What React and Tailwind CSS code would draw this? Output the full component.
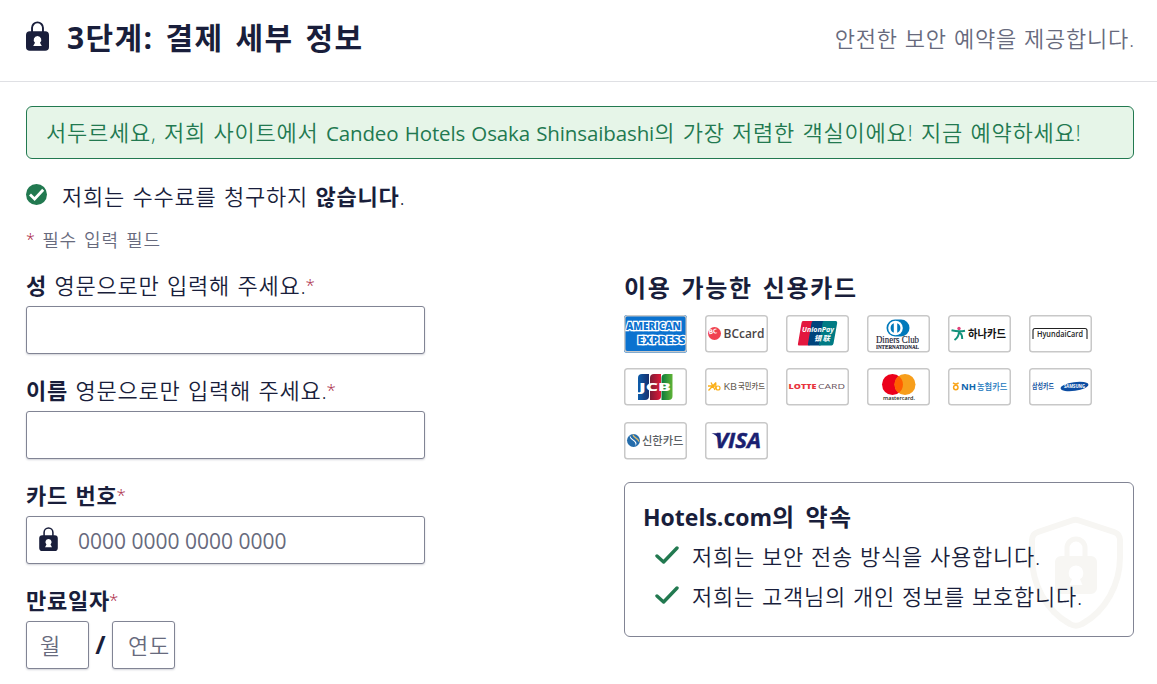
import clsx from 'clsx';

const SANS = "font-['Open_Sans','Noto_Sans_CJK_KR',sans-serif]";

function LockIcon({ className }) {
  return (
    <svg viewBox="0 0 24 31" className={className} fill="none">
      <path d="M6.300 12V7a5.700 5.700 0 0 1 11.400 0V12" stroke="#191e3b" strokeWidth="2" />
      <path
        fillRule="evenodd"
        fill="#191e3b"
        d="M4 10.500h16a4 4 0 0 1 4 4V27a4 4 0 0 1-4 4H4a4 4 0 0 1-4-4V14.500a4 4 0 0 1 4-4ZM12 15.500a4 4 0 0 0-2.600 7L7.500 26h9l-1.900-3.500A4 4 0 0 0 12 15.500Z"
      />
    </svg>
  );
}

function CheckCircle() {
  return (
    <svg viewBox="0 0 21 21" className="mb-[3px] h-[21px] w-[21px] shrink-0">
      <circle cx="10.500" cy="10.500" r="10.500" fill="#227950" />
      <path d="M4 10.500l4.600 4.500L17.200 5.800" fill="none" stroke="#fff" strokeWidth="2.800" />
    </svg>
  );
}

function Check() {
  return (
    <svg viewBox="0 0 24 18" className="mb-[3px] h-[18px] w-6 shrink-0">
      <path
        d="M2 10l6.600 6L22 2"
        fill="none"
        stroke="#227950"
        strokeWidth="3.400"
        strokeLinecap="round"
        strokeLinejoin="round"
      />
    </svg>
  );
}

function Shield() {
  return (
    <svg viewBox="0 0 96 114" className="absolute right-[9px] bottom-[6px] h-[114px] w-24" fill="none">
      <path
        d="M44 4.500a10 10 0 0 1 7 0L86 16c4 1.400 6 4 6 8v17c0 27-14 54-38 67-4 2.300-8 2.300-12 0C18 95 4 68 4 41V24c0-4 2-6.600 6-8Z"
        stroke="#f7f6f3"
        strokeWidth="6"
      />
      <path d="M39 43V32a9 9 0 0 1 18 0v11" stroke="#f7f6f3" strokeWidth="5" />
      <path
        fillRule="evenodd"
        fill="#f7f6f3"
        d="M33 40h30a6 6 0 0 1 6 6v26a6 6 0 0 1-6 6H33a6 6 0 0 1-6-6V46a6 6 0 0 1 6-6ZM48 49.500a7.500 7.500 0 0 0-4 13.700L41.500 69h13L52 63.200A7.500 7.500 0 0 0 48 49.500Z"
      />
    </svg>
  );
}

const bodyText = 'text-[22px] tracking-[0.76px] [word-spacing:1px] whitespace-nowrap';

function Label({ bold, hint }) {
  return (
    <label className={clsx('block h-[39px] leading-[37px]', bodyText)}>
      <span className="font-bold">{bold}</span>
      {hint && <span> {hint}</span>}
      <span className="ml-[-1px] align-[3px] text-[17px] leading-none text-[#a7183c]">*</span>
    </label>
  );
}

const inputClass =
  'block h-12 rounded-[3px] border border-[#818494] bg-white text-[22px] shadow-[0_1px_2px_rgba(25,30,59,0.2)] outline-none placeholder:text-[#676a7d]';

const cards = [
  {
    name: 'amex',
    logo: (
      <>
        <rect width="63" height="37.800" fill="#0b72cf" />
        <g fill="#0b72cf" stroke="#fff" strokeWidth="2.400" paintOrder="stroke" fontWeight="800" fontSize="10.500">
          <text x="2" y="15.500" textLength="55" lengthAdjust="spacingAndGlyphs">AMERICAN</text>
          <text x="13.500" y="28.800" textLength="48" lengthAdjust="spacingAndGlyphs">EXPRESS</text>
        </g>
      </>
    ),
  },
  {
    name: 'bc',
    logo: (
      <>
        <circle cx="9.500" cy="18.500" r="6.500" fill="#f0424f" />
        <text x="4" y="18.500" fontSize="6.500" fontWeight="700" fill="#fff" transform="rotate(-8 9.500 18.500)">BC</text>
        <text x="18.500" y="22.800" fontSize="12" fontWeight="600" fill="#4a4546" textLength="41" lengthAdjust="spacingAndGlyphs">BCcard</text>
      </>
    ),
  },
  {
    name: 'unionpay',
    logo: (
      <>
        <path d="M17 6h11l-4.500 24.500H12.500q-1-.5-.5-2L15.500 8q.3-2 1.500-2Z" fill="#e3173e" />
        <path d="M27 6h12l-4.500 24.500H22.500q-1-.5-.5-2L25.500 8q.3-2 1.500-2Z" fill="#00447c" />
        <path d="M38 6h12q1.500.3 1.200 2L47.500 28.500q-.5 2-2 2H33.500q-1-.5-.5-2L36.500 8q.3-2 1.500-2Z" fill="#007b84" />
        <g fill="#fff" fontWeight="700" fontStyle="italic">
          <text x="16" y="17" fontSize="7.500" textLength="32" lengthAdjust="spacingAndGlyphs">UnionPay</text>
          <text x="28" y="26" fontSize="7.500" textLength="16">银联</text>
        </g>
      </>
    ),
  },
  {
    name: 'diners',
    logo: (
      <>
        <path d="M28 4.500h6a8.300 8.300 0 0 1 0 17h-6a8.500 8.500 0 0 1 0-17Z" fill="#0079bb" />
        <circle cx="28.500" cy="13" r="7.300" fill="#fff" />
        <path d="M26.800 8.200v9.600a5.200 5.200 0 0 1 0-9.600ZM30.200 8.200v9.600a5.200 5.200 0 0 0 0-9.600Z" fill="#0079bb" />
        <g fill="#1b1b32" fontFamily="Liberation Serif, serif" stroke="#1b1b32" strokeWidth=".15">
          <text x="9" y="28.500" fontSize="9.500" textLength="43" lengthAdjust="spacingAndGlyphs">Diners Club</text>
          <text x="9" y="34.300" fontSize="5.500" fontWeight="700" textLength="43" lengthAdjust="spacingAndGlyphs">INTERNATIONAL</text>
        </g>
      </>
    ),
  },
  {
    name: 'hana',
    logo: (
      <>
        <circle cx="11" cy="13.500" r="1.700" fill="#e0457b" />
        <path d="M3.500 15.200q7 1.800 13.500.5M11 16c0 4-1.500 7-4.500 9M11 18c2.500 0 3.200 3 3.200 6" fill="none" stroke="#12917b" strokeWidth="2" />
        <text x="20" y="23" fontSize="11" fontWeight="700" fill="#111" textLength="38" lengthAdjust="spacingAndGlyphs">하나카드</text>
      </>
    ),
  },
  {
    name: 'hyundai',
    logo: (
      <>
        <path d="M4 24V15.500q0-2 2-2h50q2 0 2 2V24" fill="none" stroke="#222" strokeWidth="1.100" />
        <text x="8" y="22.500" fontSize="8" fontWeight="600" fill="#222" textLength="46" lengthAdjust="spacingAndGlyphs">HyundaiCard</text>
      </>
    ),
  },
  {
    name: 'jcb',
    logo: (
      <>
        <defs>
          <linearGradient id="jcbBlue">
            <stop offset="0" stopColor="#0d5ca9" />
            <stop offset="1" stopColor="#16306e" />
          </linearGradient>
          <linearGradient id="jcbRed">
            <stop offset="0" stopColor="#7b1b36" />
            <stop offset="1" stopColor="#df1738" />
          </linearGradient>
          <linearGradient id="jcbGreen">
            <stop offset="0" stopColor="#0a7a3c" />
            <stop offset="1" stopColor="#5fb336" />
          </linearGradient>
        </defs>
        <path d="M18 6h7v22q0 4-4 4h-7V10q0-4 4-4Z" fill="url(#jcbBlue)" />
        <path d="M30 6h7v22q0 4-4 4h-7V10q0-4 4-4Z" fill="url(#jcbRed)" />
        <path d="M41.500 6h7v22q0 4-4 4h-7V10q0-4 4-4Z" fill="url(#jcbGreen)" />
        <text x="15" y="22.800" fontSize="10" fontWeight="800" fill="#fff" textLength="32" lengthAdjust="spacingAndGlyphs">JCB</text>
      </>
    ),
  },
  {
    name: 'kb',
    logo: (
      <>
        <path d="M3 18h7M6 14.500l4 7.500M3.500 22.500l7.500-8M10.800 14.500V21" fill="none" stroke="#fbaf17" strokeWidth="1.300" />
        <circle cx="13" cy="20" r="2" fill="none" stroke="#fbaf17" strokeWidth="1.200" />
        <text x="18.500" y="22" fontSize="9.500" fontWeight="400" fill="#645a4f" textLength="13.500" lengthAdjust="spacingAndGlyphs">KB</text>
        <text x="33" y="21.500" fontSize="8" fontWeight="500" fill="#645a4f" textLength="27" lengthAdjust="spacingAndGlyphs">국민카드</text>
      </>
    ),
  },
  {
    name: 'lotte',
    logo: (
      <>
        <text x="2.500" y="20.800" fontSize="7" fontWeight="800" fill="#e8343d" textLength="28" lengthAdjust="spacingAndGlyphs">LOTTE</text>
        <text x="32" y="20.800" fontSize="7" fontWeight="500" fill="#6b5560" textLength="27" lengthAdjust="spacingAndGlyphs">CARD</text>
      </>
    ),
  },
  {
    name: 'mastercard',
    logo: (
      <>
        <circle cx="25.500" cy="16.500" r="10.500" fill="#eb001b" />
        <circle cx="38" cy="16.500" r="10.500" fill="#f79e1b" />
        <path d="M31.750 8.100a10.500 10.500 0 0 1 0 16.800a10.500 10.500 0 0 1 0-16.800Z" fill="#ff5f00" />
        <text x="16" y="32.500" fontSize="5.500" fontWeight="600" fill="#231f20" textLength="32" lengthAdjust="spacingAndGlyphs">mastercard.</text>
      </>
    ),
  },
  {
    name: 'nh',
    logo: (
      <>
        <circle cx="7.800" cy="19.500" r="2.200" fill="none" stroke="#f9a51a" strokeWidth="1.500" />
        <path d="M5 14.800q2.800 2.700 5.600 0" fill="none" stroke="#f9a51a" strokeWidth="1.500" />
        <text x="13" y="22" fontSize="9.500" fontWeight="700" fill="#0f66ae" textLength="15" lengthAdjust="spacingAndGlyphs">NH</text>
        <text x="29" y="21.800" fontSize="8.800" fontWeight="500" fill="#2077bd" textLength="30.500" lengthAdjust="spacingAndGlyphs">농협카드</text>
      </>
    ),
  },
  {
    name: 'samsung',
    logo: (
      <>
        <text x="3" y="21.500" fontSize="8" fontWeight="700" fill="#1c5aa6" textLength="22" lengthAdjust="spacingAndGlyphs">삼성카드</text>
        <ellipse cx="45.500" cy="18.500" rx="14" ry="4.300" fill="#0c4da2" transform="rotate(-8 45.500 18.500)" />
        <text x="35" y="20.300" fontSize="4.500" fontWeight="700" fill="#fff" textLength="21" lengthAdjust="spacingAndGlyphs">SAMSUNG</text>
      </>
    ),
  },
  {
    name: 'shinhan',
    logo: (
      <>
        <circle cx="9.500" cy="18.500" r="6.500" fill="#246cab" />
        <path d="M6 13.500c-2 4 7 5 5.500 10.500 4-5-4.500-6-5.500-10.500Z" fill="#fff" />
        <path d="M9 12.500c0 3 5 3.500 6 7" fill="none" stroke="#d8ba70" strokeWidth="1.300" />
        <text x="18" y="23" fontSize="11.500" fontWeight="500" fill="#5b5f64" textLength="41.500" lengthAdjust="spacingAndGlyphs">신한카드</text>
      </>
    ),
  },
  {
    name: 'visa',
    logo: (
      <>
        <text x="10" y="26.500" fontSize="21" fontWeight="700" fontStyle="italic" fill="#1a1f71" stroke="#1a1f71" strokeWidth=".5" textLength="46" lengthAdjust="spacingAndGlyphs">
          VISA
        </text>
        <path d="M6.500 11.300h6l3 3.500-2 2q-2-4-7-5.500Z" fill="#1a1f71" />
      </>
    ),
  },
];

const promises = ['저희는 보안 전송 방식을 사용합니다.', '저희는 고객님의 개인 정보를 보호합니다.'];

export default function App() {
  return (
    <div className={clsx('h-[684px] w-full overflow-hidden bg-white font-[350] text-[#191e3b]', SANS)}>
      <header className="flex h-[82px] items-center justify-between border-b border-[#dfe0e4] pr-[22px] pb-1 pl-[26px]">
        <h1 className="flex items-center text-[30px] leading-[42px] font-bold tracking-[1.400px] whitespace-nowrap [word-spacing:2.800px]">
          <LockIcon className="mr-[18px] mb-[5px] h-[30px] w-[23px]" />
          <span className="mb-0.5">3단계: 결제 세부 정보</span>
        </h1>
        <p className="text-[22px] tracking-[0.760px] whitespace-nowrap text-[#676a7d] [word-spacing:0.600px]">안전한 보안 예약을 제공합니다.</p>
      </header>

      <main className="px-[26px] pt-6">
        <div
          className={clsx(
            'mr-[-3px] flex h-[53px] items-center rounded-md border border-[#227950] bg-[#e6f5e8] pl-[19px] text-[#227950]',
            bodyText,
          )}
        >
          <p className="mb-px">
            서두르세요, 저희 사이트에서{' '}
            <span className="text-[20.500px] font-normal tracking-[-0.120px]">Candeo Hotels Osaka Shinsaibashi</span>의 가장 저렴한
            객실이에요! 지금 예약하세요!
          </p>
        </div>

        <div className={clsx('mt-[19px] flex h-9 items-center', bodyText)}>
          <CheckCircle />
          <p className="ml-[15px]">
            저희는 수수료를 청구하지 <b>않습니다</b>.
          </p>
        </div>
        <p className="mt-[13px] h-[27px] text-[18px] leading-[27px] tracking-[0.760px] text-[#676a7d] [word-spacing:1.900px]">
          <span className="align-[2px] text-[16px] leading-none tracking-normal text-[#a7183c]">*</span> 필수 입력 필드
        </p>

        <div className="flex">
          <form className="mt-[13px] w-[598px] shrink-0 space-y-[18px]">
            <div>
              <Label bold="성" hint="영문으로만 입력해 주세요." />
              <input className={clsx(inputClass, 'w-[399px]')} />
            </div>
            <div>
              <Label bold="이름" hint="영문으로만 입력해 주세요." />
              <input className={clsx(inputClass, 'w-[399px]')} />
            </div>
            <div>
              <Label bold="카드 번호" />
              <div className={clsx(inputClass, 'flex w-[399px] items-center pl-3')}>
                <LockIcon className="mr-[20px] mb-[2px] h-[24px] w-[19px]" />
                <input
                  className="w-80 pt-[3px] text-[21px] font-normal outline-none placeholder:text-[#676a7d]"
                  placeholder="0000 0000 0000 0000"
                />
              </div>
            </div>
            <div>
              <Label bold="만료일자" />
              <div className="flex items-center">
                <input className={clsx(inputClass, 'w-[63px] pl-[13px]')} placeholder="월" />
                <span className="w-[23px] text-center text-[25px] font-bold">/</span>
                <input className={clsx(inputClass, 'w-[63px] pl-[15px] tracking-[0.760px]')} placeholder="연도" />
              </div>
            </div>
          </form>

          <section className="mt-[18px] w-[510px] shrink-0">
            <h2 className="h-[43px] text-[24px] leading-[32px] font-bold tracking-[1.700px] [word-spacing:2px]">이용 가능한 신용카드</h2>
            <ul className="grid grid-cols-[repeat(6,63px)] gap-x-[18px] gap-y-[15.6px]">
              {cards.map((card) => (
                <li key={card.name} className="h-[37.8px] overflow-hidden rounded-[3px]">
                  <svg viewBox="0 0 63 37.800" className="block h-full w-full">
                    {card.logo}
                    <rect x=".75" y=".75" width="61.500" height="36" rx="2.500" fill="none" stroke="#c8c8c8" strokeWidth="1.500" />
                  </svg>
                </li>
              ))}
            </ul>

            <div className="relative mt-[22.4px] h-[155px] rounded-md border border-[#818494] pt-4 pl-[18px]">
              <Shield />
              <h2 className="relative h-[38px] text-[23px] leading-9 font-bold whitespace-nowrap">
                Hotels.com<span className="text-[24px] tracking-[1.500px] [word-spacing:2px]">의 약속</span>
              </h2>
              <ul className="relative pl-3">
                {promises.map((text) => (
                  <li key={text} className="flex h-10 items-center text-[22px] tracking-[0.760px] whitespace-nowrap [word-spacing:0.500px]">
                    <Check />
                    <span className="ml-[13px]">{text}</span>
                  </li>
                ))}
              </ul>
            </div>
          </section>
        </div>
      </main>
    </div>
  );
}
